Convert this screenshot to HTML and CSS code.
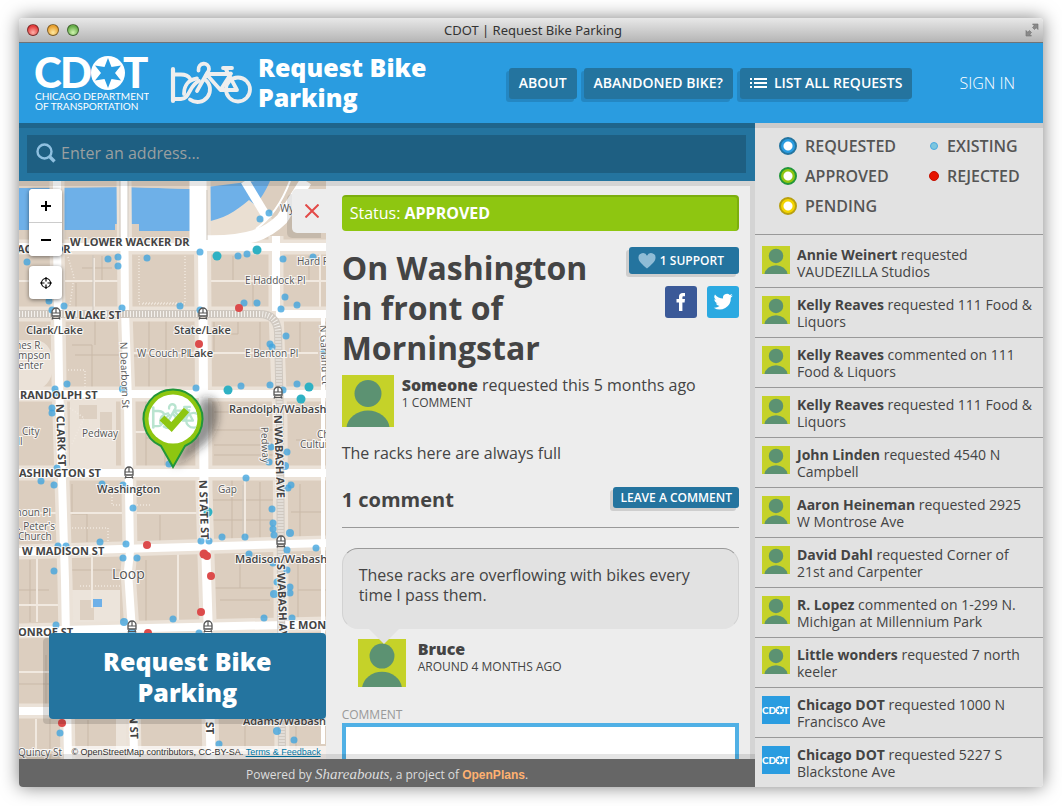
FILE: index.html
```html
<!DOCTYPE html>
<html lang="en">
<head>
<meta charset="utf-8">
<title>CDOT | Request Bike Parking</title>
<link rel="stylesheet" href="styles.css">
</head>
<body>
<svg class="sprites" aria-hidden="true">
  <symbol id="person" viewBox="0 0 52 52">
    <rect width="52" height="52" fill="#c5d229"/>
    <circle cx="26" cy="18.500" r="13.500" fill="#5c9272"/>
    <path d="M4.500 52a21.700 19 0 0 1 43 0z" fill="#5c9272"/>
  </symbol>
  <symbol id="star" viewBox="-17 -17 34 34">
    <circle r="17" fill="#fff"/>
    <path d="M0-15 3.500-6 13-7.500 7 0 13 7.500 3.500 6 0 15-3.500 6-13 7.500-7 0-13-7.500-3.500-6z" fill="#2a9ce0"/>
  </symbol>
  <symbol id="cdot" viewBox="0 0 28 28">
    <rect width="28" height="28" fill="#2a9ce0"/>
    <text class="cdot-small" x="0" y="18">CD</text>
    <use href="#star" x="13.500" y="10" width="8.500" height="8.500"/>
    <text class="cdot-small" x="21" y="18">T</text>
  </symbol>
  <symbol id="tram" viewBox="0 0 10 13">
    <path d="M1 9V5a4 4 0 0 1 8 0v4z" fill="#fff" stroke="#555" stroke-width="1.300"/>
    <path d="M1 6h8M5 1v5M2 10l-1 2.500M8 10l1 2.500M2 11.500h6" stroke="#555" stroke-width="1.200" fill="none"/>
  </symbol>
</svg>

<div class="window">
  <div class="titlebar">
    <div class="lights"><span class="light red"></span><span class="light amber"></span><span class="light green"></span></div>
    <div class="window-title">CDOT | Request Bike Parking</div>
    <div class="corner"><svg viewBox="0 0 14 14" width="14" height="14" aria-hidden="true"><path d="M7.500 1H13v5.500l-1.800-1.800L9.500 6.500l-2-2 1.700-1.700zM1 7.500l1.800 1.800L4.500 7.500l2 2-1.700 1.700L6.500 13H1z" fill="#8a8a8a" stroke="#707070" stroke-width=".6"/></svg></div>
  </div>

  <header class="header">
    <a class="logo" href="#" aria-label="Chicago Department of Transportation">
      <svg viewBox="33 56 116 56" width="116" height="56">
        <text class="cdot-big" x="34" y="89">C</text>
        <text class="cdot-big" x="60" y="89">D</text>
        <use href="#star" x="91" y="57" width="34" height="34"/>
        <text class="cdot-big" x="123" y="89">T</text>
        <text class="cdot-line" x="35" y="101">CHICAGO DEPARTMENT</text>
        <text class="cdot-line" x="35" y="111">OF TRANSPORTATION</text>
      </svg>
    </a>
    <a class="brand" href="#">
      <svg class="bike" viewBox="170 58 83 45" width="83" height="45" aria-hidden="true">
        <g id="bike-shape" fill="none" stroke-width="3.800" stroke-linecap="round" stroke-linejoin="round">
          <path d="M173 67v32" stroke-width="4.200"/>
          <path d="M175 72.500h6c5 0 7 1 9 4M175 97h6c9 0 8-14 18-18"/>
          <path d="M184 92c0-9 5-14.500 13-15.500M205 77.500a12 12 0 1 1-15 20"/>
          <circle cx="238" cy="87.500" r="12"/>
          <path d="M198.500 68.500c-1-8.500 10.500-9 10.500-1.500 0 3-2 3-3 6L197 89M207 72h20.500M208 74l12.500 14H237L226 67.500M223 66h9M231 71.500 220.500 88"/>
        </g>
      </svg>
      <span class="brand-name">Request Bike Parking</span>
    </a>
    <nav class="nav">
      <a class="btn" href="#">ABOUT</a>
      <a class="btn" href="#">ABANDONED BIKE?</a>
      <a class="btn" href="#"><svg viewBox="0 0 17 12" width="17" height="12" aria-hidden="true"><path d="M0 2h2M0 6h2M0 10h2M4 2h13M4 6h13M4 10h13" stroke="#fff" stroke-width="2"/></svg>LIST ALL REQUESTS</a>
    </nav>
    <a class="signin" href="#">SIGN IN</a>
  </header>

  <div class="body">
    <main class="main">
      <form class="search">
        <label class="search-box">
          <svg viewBox="0 0 20 20" width="20" height="20" aria-hidden="true"><circle cx="8.500" cy="8.500" r="7" fill="none" stroke="#8fc0e0" stroke-width="2.400"/><path d="m13.500 13.500 5 5" stroke="#8fc0e0" stroke-width="3.400"/></svg>
          <input type="text" placeholder="Enter an address..." aria-label="Enter an address">
        </label>
      </form>

      <div class="content">
        <section class="map">
          <svg class="map-art" viewBox="19 181 307 578" preserveAspectRatio="xMinYMin slice" role="img" aria-label="Map of the Loop">
            <defs>
              <clipPath id="pin-face"><circle cx="173" cy="419" r="24.500"/></clipPath>
              <filter id="soft" x="-30%" y="-30%" width="160%" height="160%"><feGaussianBlur stdDeviation="4"/></filter>
            </defs>
            <rect x="19" y="181" width="307" height="578" fill="#dccebf"/>
            <path d="M19 188l106-1 66 2 64-8h15c-6 14-13 24-26 33-14 9-26 9-40 14v3h-65v-7h-8v7h-12v-7h-4v6H19z" fill="#6eb0e8"/>
            <path d="M19 188l106-1 66 2 14-2v-6H19z" fill="#dfd1c2"/>
            <path d="M205 222c18-3 30-10 44-22l28 23c-15 13-38 17-72 17z" fill="#eadfd2"/>
            <path d="M19 340h18c22 4 22 44 0 50l-18 6M70 398h46v70H70z" fill="#ebe2d8"/>
            <path d="M70 590h50v40H70zM116 719h23v30h-23z" fill="#ece4db"/>
            <path d="M79 405h18v14H79zM100 412h12v24h-12zM80 600h14v20H80z" fill="#ddd0c2"/>
            <g fill="none" stroke="#c9b9a8" stroke-width="1">
              <path d="M149 320v72M145 356h-17M166 320v74M214 322v30M260 322v31M238 322v12h-24M300 322v30M233 256v24M253 283v30M309 256v24M72 345h20v48M75 355h44M95 320v25M146 400v68M146 438h50M165 437v32M214 412h60M214 430h60M232 480v60M260 482v60M72 484v30h15v28M160 515v28M178 556v70M146 560v64M214 588h60M220 600h50M240 556v32M298 560v60M298 590h28M296 410h28M296 440h28M300 484v58M30 560v62M19 590h30M46 655v60M19 684h30M50 719v40M88 720v38M245 720v30M296 720v34M102 256v24M82 268h30M76 283v28M214 445h60M214 455h60M291 512h34M213 500h60M213 520h60M72 570h50"/>
            </g>
            <g fill="none" stroke="#f1e9e0" stroke-width="2">
              <path d="M19 281h101M205 281h121M128 353h190M128 432h70M19 513h180M19 605h40M92 548v60M178 548v76M245 480v60M37 548v74M94 258v54M19 672h30M36 719v38M19 750h300M138 750v9M320 240v70"/>
              <path d="M139 256v48h46v-48M143 303h42M68 257l6 20-5 34M65 370h20v24M70 408l14 10-12 26M108 544v-16H68M150 505H112v-16M80 586h46" stroke-dasharray="1 2" stroke-width="1.500"/>
            </g>
            <g fill="none" stroke="#ebe2d8">
              <path d="M57 181v60l2 140 3 100 3 100 3 178" stroke-width="15"/>
              <path d="M124 181l1 130 3 90 1 90 1 60-2 20 4 60 2 128" stroke-width="15"/>
              <path d="M202 181l1 130 1 180 4 130 3 138" stroke-width="17"/>
              <path d="M276 236v75l4 110 2 338" stroke-width="15"/>
              <path d="M19 247h307M19 314h307M19 394h307M19 473h307M19 552l307-9M19 631l307-7M19 711h307" stroke-width="15"/>
            </g>
            <g fill="none" stroke="#fff">
              <path d="M57 181v60l2 140 3 100 3 100 3 178" stroke-width="8"/>
              <path d="M124 181l1 130 3 90 1 90 1 60-2 20 4 60 2 128" stroke-width="8"/>
              <path d="M194 181v66M202 181l1 130 1 180 4 130 3 138" stroke-width="9"/>
              <path d="M276 236v75" stroke-width="8"/>
              <path d="M19 247h307M276 314h50M19 394h307M19 473h307M19 552l307-9M19 631l307-7M19 711h307" stroke-width="8"/>
              <path d="M200 241c50 2 68-8 82-22l24-38" stroke-width="12"/>
              <path d="M245 181l23 38" stroke-width="9"/>
              <path d="M323 314v430" stroke-width="4"/>
              <path d="M290 181c-9 24-20 38-34 48" stroke-width="2"/>
            </g>
            <g fill="none" stroke="#cdc6bd">
              <path d="M19 314h240q18 0 19 18l2 90 2 337" stroke-width="8" stroke="#d0c9c1"/>
              <path d="M19 314h240q18 0 19 18l2 90 2 337" stroke-width="6" stroke-dasharray="1 2" stroke="#f4f1ed"/>
              <path d="M93 255v55M243 485v52M207 190v50M120 181v60M128 181v60"/>
            </g>
            <path d="M93 599h9v8h-9z" fill="#6eb0e8"/>
            <g fill="#3fa4df" fill-opacity=".78">
              <circle cx="27" cy="262" r="3.500"/><circle cx="108" cy="259" r="3.500"/><circle cx="118" cy="257" r="3.500"/><circle cx="118" cy="266" r="3.500"/><circle cx="147" cy="258" r="3.500"/><circle cx="200" cy="252" r="3.500"/><circle cx="238" cy="256" r="3.500"/><circle cx="247" cy="254" r="3.500"/><circle cx="260" cy="219" r="3.500"/><circle cx="269" cy="213" r="3.500"/><circle cx="283" cy="259" r="3.500"/><circle cx="313" cy="257" r="3.500"/><circle cx="285" cy="297" r="3.500"/><circle cx="297" cy="305" r="3.500"/><circle cx="257" cy="303" r="3.500"/><circle cx="244" cy="303" r="3.500"/><circle cx="281" cy="309" r="3.500"/><circle cx="122" cy="308" r="3.500"/><circle cx="180" cy="306" r="3.500"/><circle cx="64" cy="306" r="3.500"/><circle cx="49" cy="301" r="3.500"/><circle cx="52" cy="310" r="3.500"/><circle cx="200" cy="310" r="3.500"/><circle cx="190" cy="331" r="3.500"/><circle cx="286" cy="336" r="3.500"/><circle cx="270" cy="344" r="3.500"/><circle cx="272" cy="347" r="3.500"/><circle cx="67" cy="384" r="3.500"/><circle cx="241" cy="386" r="3.500"/><circle cx="270" cy="385" r="3.500"/><circle cx="297" cy="384" r="3.500"/><circle cx="324" cy="353" r="3.500"/>
              <circle cx="55" cy="389" r="3.500"/><circle cx="56" cy="393" r="3.500"/><circle cx="52" cy="408" r="3.500"/><circle cx="52" cy="413" r="3.500"/><circle cx="123" cy="389" r="4"/><circle cx="196" cy="388" r="3.500"/><circle cx="283" cy="390" r="3.500"/><circle cx="57" cy="468" r="3.500"/><circle cx="41" cy="481" r="3.500"/><circle cx="54" cy="485" r="3.500"/><circle cx="102" cy="484" r="3.500"/><circle cx="123" cy="485" r="3.500"/><circle cx="169" cy="464" r="3.500"/><circle cx="246" cy="478" r="3.500"/><circle cx="133" cy="508" r="3.500"/><circle cx="271" cy="447" r="3.500"/><circle cx="287" cy="452" r="3.500"/><circle cx="269" cy="462" r="3.500"/><circle cx="285" cy="466" r="4"/><circle cx="291" cy="485" r="3.500"/><circle cx="288" cy="488" r="3.500"/><circle cx="272" cy="509" r="3.500"/><circle cx="273" cy="523" r="3.500"/><circle cx="273" cy="529" r="3.500"/><circle cx="274" cy="535" r="3.500"/><circle cx="290" cy="533" r="4"/><circle cx="201" cy="541" r="3.500"/><circle cx="209" cy="541" r="3.500"/><circle cx="222" cy="537" r="3.500"/><circle cx="245" cy="537" r="3.500"/><circle cx="126" cy="544" r="3.500"/><circle cx="100" cy="542" r="3.500"/><circle cx="58" cy="546" r="3.500"/><circle cx="66" cy="546" r="3.500"/><circle cx="54" cy="571" r="3.500"/><circle cx="123" cy="558" r="3.500"/><circle cx="137" cy="558" r="3.500"/><circle cx="287" cy="550" r="3.500"/><circle cx="249" cy="554" r="3.500"/><circle cx="273" cy="563" r="3.500"/><circle cx="287" cy="570" r="3.500"/><circle cx="277" cy="582" r="3.500"/><circle cx="290" cy="587" r="3.500"/><circle cx="316" cy="548" r="3.500"/>
              <circle cx="56" cy="625" r="3.500"/><circle cx="124" cy="622" r="4"/><circle cx="173" cy="619" r="3.500"/><circle cx="274" cy="594" r="4"/><circle cx="290" cy="593" r="3.500"/><circle cx="264" cy="618" r="3.500"/><circle cx="292" cy="618" r="3.500"/><circle cx="132" cy="632" r="4"/><circle cx="199" cy="633" r="3.500"/><circle cx="60" cy="733" r="3.500"/><circle cx="219" cy="744" r="3.500"/><circle cx="277" cy="731" r="4"/><circle cx="294" cy="740" r="3.500"/>
            </g>
            <g fill="#2fb1c3"><circle cx="217" cy="256" r="4.500"/><circle cx="257" cy="250" r="4.500"/><circle cx="228" cy="390" r="4.500"/><circle cx="309" cy="387" r="4.500"/><circle cx="301" cy="399" r="4.500"/><circle cx="208" cy="512" r="4.500"/></g>
            <g fill="#dc4b4b"><circle cx="239" cy="308" r="4"/><circle cx="199" cy="344" r="4"/><circle cx="147" cy="545" r="4"/><circle cx="204" cy="554" r="4.500"/><circle cx="207" cy="556" r="4"/><circle cx="211" cy="576" r="4"/><circle cx="201" cy="612" r="4"/><circle cx="62" cy="723" r="4"/><circle cx="148" cy="633" r="4"/></g>
            <use href="#tram" x="51" y="307" width="10" height="13"/><use href="#tram" x="198" y="307" width="10" height="13"/><use href="#tram" x="273" y="386" width="10" height="13"/><use href="#tram" x="124" y="466" width="10" height="13"/><use href="#tram" x="276" y="535" width="10" height="13"/><use href="#tram" x="127" y="620" width="10" height="13"/><use href="#tram" x="203" y="620" width="10" height="13"/>
            <g class="road">
              <text x="70" y="246">W LOWER WACKER DR</text><text x="17" y="253">ACKER DR</text>
              <text x="65" y="319">W LAKE ST</text><text x="20" y="399">RANDOLPH ST</text>
              <text x="19" y="477">ASHINGTON ST</text><text x="22" y="555">W MADISON ST</text>
              <text x="18" y="636">ONROE ST</text><text x="289" y="629">E MONROE</text>
              <text transform="translate(56 404) rotate(88)">N CLARK ST</text>
              <text transform="translate(199 480) rotate(88)">N STATE ST</text>
              <text transform="translate(274 415) rotate(88)">N WABASH AVE</text>
              <text transform="translate(277 564) rotate(88)">S WABASH AVE</text>
              <text transform="translate(129 699) rotate(88)">ORN ST</text>
              <text transform="translate(205 699) rotate(88)">ATE ST</text>
            </g>
            <g class="place">
              <text x="26" y="334">Clark/Lake</text><text x="174" y="334">State/Lake</text><text x="188" y="357">Lake</text>
              <text x="229" y="413">Randolph/Wabash</text><text x="97" y="493">Washington</text><text x="235" y="563">Madison/Wabash</text><text x="243" y="725">Adams/Wabash</text>
            </g>
            <g class="minor">
              <text x="280" y="212">Wy</text><text x="297" y="265">Hard R</text><text x="245" y="284">E Haddock Pl</text>
              <text x="137" y="357">W Couch Pl</text><text x="245" y="357">E Benton Pl</text>
              <text x="12" y="349">mes R.</text><text x="12" y="359">ompson</text><text x="12" y="369">Center</text>
              <text x="22" y="435">City</text><text x="12" y="445">all</text><text x="82" y="437">Pedway</text><text x="218" y="493">Gap</text>
              <text x="317" y="438">Chicago</text><text x="300" y="448">Cultural</text>
              <text x="13" y="516">lhoun Pl</text><text x="18" y="530">. Peter's</text><text x="18" y="540">Church</text>
              <text x="18" y="756">Quincy St</text>
              <text transform="translate(120 342) rotate(88)">N Dearborn St</text>
              <text transform="translate(261 427) rotate(88)">Pedway</text>
              <text transform="translate(320 325) rotate(88)">N Garland Ct</text>
            </g>
            <text class="district" x="112" y="579">Loop</text>
            <path d="M173 468l22-36 6-34 12 0c8 10 6 30-6 44z" fill="#222" fill-opacity=".5" filter="url(#soft)"/>
            <path d="M173 467l-12-21a29.500 29.500 0 1 1 24 0z" fill="#8ec611" stroke="#22963a" stroke-width="2"/>
            <circle cx="173" cy="419" r="24.500" fill="#fff"/>
            <g clip-path="url(#pin-face)"><use href="#bike-shape" transform="translate(46 366) scale(.62)" stroke="#b9e4d0"/></g>
            <path d="M162 418l9.500 9 15-17" fill="none" stroke="#8ec611" stroke-width="7"/>
          </svg>
          <div class="zoom"><button type="button" aria-label="Zoom in"><svg viewBox="0 0 12 12" width="12" height="12"><path d="M6 1v10M1 6h10" stroke="#000" stroke-width="2"/></svg></button><button type="button" aria-label="Zoom out"><svg viewBox="0 0 12 12" width="12" height="12"><path d="M1 6h10" stroke="#000" stroke-width="2"/></svg></button></div>
          <button class="locate" type="button" aria-label="Locate me"><svg viewBox="0 0 14 14" width="14" height="14"><circle cx="7" cy="7" r="4.500" fill="none" stroke="#000" stroke-width="1.200"/><path d="M7 1v4.500M7 8.500V13M1 7h4.500M8.500 7H13" stroke="#000" stroke-width="1.200"/></svg></button>
          <button class="close" type="button" aria-label="Close"><svg viewBox="0 0 14 14" width="14" height="14"><path d="M.500.500l13 13M13.500.500l-13 13" stroke="#e34a48" stroke-width="2"/></svg></button>
          <button class="add" type="button">Request Bike<br>Parking</button>
          <div class="credit">© OpenStreetMap contributors, CC-BY-SA. <a href="#">Terms &amp; Feedback</a></div>
        </section>

        <section class="detail">
          <div class="status">Status: <strong>APPROVED</strong></div>
          <div class="heading">
            <h1>On Washington in front of Morningstar</h1>
            <div class="actions">
              <button class="btn support" type="button"><svg viewBox="0 0 18 16" width="18" height="16" aria-hidden="true"><path d="M9 15.500C5 12 .500 8.500.500 5A4.400 4.400 0 0 1 9 3a4.400 4.400 0 0 1 8.500 2c0 3.500-4.500 7-8.500 10.500z" fill="#8fbcd6"/></svg>1 SUPPORT</button>
              <div class="social">
                <a class="facebook" href="#" aria-label="Facebook"><svg viewBox="0 0 32 32"><path d="M14 25v-8.500h-2.500V13H14v-2.200C14 8.200 15.500 7 17.800 7H20v3.200h-1.400c-.9 0-1.200.4-1.200 1.200V13H20l-.4 3.500h-2.200V25z" fill="#fff"/></svg></a>
                <a class="twitter" href="#" aria-label="Twitter"><svg viewBox="0 0 32 32"><path d="M25.800 9.600a8 8 0 0 1-2.200.7 4 4 0 0 0 1.600-2.200 8 8 0 0 1-2.400 1 3.900 3.900 0 0 0-6.700 3.500A11 11 0 0 1 8 8.500a3.900 3.900 0 0 0 1.200 5.300 4 4 0 0 1-1.800-.5c0 2 1.300 3.600 3.200 4a4 4 0 0 1-1.800 0 3.900 3.900 0 0 0 3.700 2.700A7.900 7.900 0 0 1 6.700 21.700 11.100 11.100 0 0 0 23.800 11.800a8 8 0 0 0 2-2.200z" fill="#fff"/></svg></a>
              </div>
            </div>
          </div>
          <div class="author">
            <svg width="52" height="52" aria-hidden="true"><use href="#person"/></svg>
            <div><p><strong>Someone</strong> requested this 5 months ago</p><p class="meta">1 COMMENT</p></div>
          </div>
          <p class="description">The racks here are always full</p>
          <div class="comments-head"><h2>1 comment</h2><a class="btn leave" href="#comment">LEAVE A COMMENT</a></div>
          <article class="comment">
            <p class="bubble">These racks are overflowing with bikes every time I pass them.</p>
            <div class="commenter">
              <svg width="48" height="48" aria-hidden="true"><use href="#person"/></svg>
              <div><p><strong>Bruce</strong></p><p class="meta">AROUND 4 MONTHS AGO</p></div>
            </div>
          </article>
          <label class="field-label" for="comment">COMMENT</label>
          <textarea id="comment" rows="4"></textarea>
        </section>
      </div>

      <footer class="footer"><p>Powered by <a class="script" href="#">Shareabouts</a>, a project of <a class="openplans" href="#">OpenPlans</a>.</p></footer>
    </main>

    <aside class="sidebar">
      <div class="legend">
        <ul>
          <li><span class="ring requested"></span>REQUESTED</li>
          <li><span class="ring approved"></span>APPROVED</li>
          <li><span class="ring pending"></span>PENDING</li>
        </ul>
        <ul>
          <li><span class="dot existing"></span>EXISTING</li>
          <li><span class="dot rejected"></span>REJECTED</li>
        </ul>
      </div>
      <ul class="feed">
        <li><svg class="face" aria-hidden="true"><use href="#person"/></svg><p><strong>Annie Weinert</strong> requested VAUDEZILLA Studios</p></li>
        <li><svg class="face" aria-hidden="true"><use href="#person"/></svg><p><strong>Kelly Reaves</strong> requested 111 Food &amp; Liquors</p></li>
        <li><svg class="face" aria-hidden="true"><use href="#person"/></svg><p><strong>Kelly Reaves</strong> commented on 111 Food &amp; Liquors</p></li>
        <li><svg class="face" aria-hidden="true"><use href="#person"/></svg><p><strong>Kelly Reaves</strong> requested 111 Food &amp; Liquors</p></li>
        <li><svg class="face" aria-hidden="true"><use href="#person"/></svg><p><strong>John Linden</strong> requested 4540 N Campbell</p></li>
        <li><svg class="face" aria-hidden="true"><use href="#person"/></svg><p><strong>Aaron Heineman</strong> requested 2925 W Montrose Ave</p></li>
        <li><svg class="face" aria-hidden="true"><use href="#person"/></svg><p><strong>David Dahl</strong> requested Corner of 21st and Carpenter</p></li>
        <li><svg class="face" aria-hidden="true"><use href="#person"/></svg><p><strong>R. Lopez</strong> commented on 1-299 N. Michigan at Millennium Park</p></li>
        <li><svg class="face" aria-hidden="true"><use href="#person"/></svg><p><strong>Little wonders</strong> requested 7 north keeler</p></li>
        <li><svg class="face" aria-hidden="true"><use href="#cdot"/></svg><p><strong>Chicago DOT</strong> requested 1000 N Francisco Ave</p></li>
        <li><svg class="face" aria-hidden="true"><use href="#cdot"/></svg><p><strong>Chicago DOT</strong> requested 5227 S Blackstone Ave</p></li>
      </ul>
    </aside>
  </div>
</div>
</body>
</html>
```

FILE: styles.css
```css
* { box-sizing: border-box; }
body {
  margin: 0;
  padding: 18px 19px 19px;
  height: 100vh;
  background: #fff;
  color: #444;
  font: 16px/20px "Open Sans", "Noto Sans", sans-serif;
}
h1, h2, p, ul { margin: 0; padding: 0; }
ul { list-style: none; }
a { color: inherit; text-decoration: none; }
button { font: inherit; border: 0; padding: 0; cursor: pointer; }
svg { display: block; flex: none; }
.sprites { position: absolute; width: 0; height: 0; }

.window {
  display: flex;
  flex-direction: column;
  height: 100%;
  overflow: hidden;
  border-radius: 4px;
  box-shadow: 0 0 18px rgba(0, 0, 0, .5);
}

/* Title bar */
.titlebar {
  display: flex;
  align-items: center;
  flex: none;
  height: 25px;
  padding: 0 4px 0 8px;
  background: linear-gradient(#e8e8e8, #b5b5b5);
  border-bottom: 1px solid #6e7377;
}
.lights { display: flex; gap: 8px; flex: 1; }
.light { width: 12px; height: 12px; border-radius: 50%; border: 1px solid rgba(0, 0, 0, .45); }
.red { background: radial-gradient(circle at 50% 75%, #ffb0a8, #e23c3c 70%); }
.amber { background: radial-gradient(circle at 50% 75%, #ffe9a0, #e8a030 70%); }
.green { background: radial-gradient(circle at 50% 75%, #d0f5b0, #66ad48 70%); }
.window-title { font: 13px/20px "Noto Sans", sans-serif; color: #333; }
.corner { display: flex; justify-content: flex-end; flex: 1; }

/* Header */
.header {
  display: flex;
  align-items: center;
  flex: none;
  height: 80px;
  padding: 0 28px 0 14px;
  background: #2a9ce0;
  color: #fff;
}
.cdot-big { font: 900 42px Lato, sans-serif; fill: #fff; }
.cdot-line { font: 10px Lato, sans-serif; fill: #fff; }
.cdot-small { font: 900 10px Lato, sans-serif; fill: #fff; }
.brand { display: flex; align-items: center; gap: 5px; margin-left: 21px; padding-bottom: 2px; }
.brand-name { width: 180px; font-size: 25px; font-weight: 800; line-height: 30px; }
.nav { display: flex; gap: 7px; margin-left: auto; }
.btn {
  display: flex;
  align-items: center;
  background: #24749f;
  color: #fff;
  border-radius: 3px;
  font-weight: 600;
  white-space: nowrap;
  box-shadow: -3px 3px 0 rgba(0, 0, 0, .13);
}
.nav .btn { gap: 7px; height: 31px; padding: 0 10px; font-size: 14px; }
.signin { margin-left: 47px; font-weight: 300; white-space: nowrap; }

/* Columns */
.body { display: flex; flex: 1; min-height: 0; }
.main { display: flex; flex-direction: column; flex: 1; min-width: 0; }
.search {
  flex: none;
  padding: 12px 9px 8px 8px;
  background: #24749f;
  box-shadow: inset 0 5px 0 rgba(0, 0, 0, .12);
}
.search-box { display: flex; align-items: center; gap: 5px; height: 38px; padding: 0 9px 2px; background: #1e5f82; }
.search input {
  flex: 1;
  min-width: 0;
  padding: 0;
  border: 0;
  outline: 0;
  background: transparent;
  color: #fff;
  font: inherit;
}
.search input::placeholder { color: #9a9fa0; opacity: 1; }
.content {
  position: relative;
  display: grid;
  grid-template-columns: minmax(0, 5fr) minmax(0, 7fr);
  flex: 1;
  min-height: 0;
}
.content::after {
  content: "";
  position: absolute;
  inset: 0;
  pointer-events: none;
  box-shadow: inset -5px 5px 0 rgba(0, 0, 0, .1), inset 0 -5px 0 rgba(0, 0, 0, .1);
}

/* Map */
.map { position: relative; overflow: hidden; }
.map-art { position: absolute; width: 100%; height: 100%; font-family: "Open Sans", sans-serif; }
.map-art text { paint-order: stroke; stroke: rgba(255, 255, 255, .8); stroke-width: 2px; fill: #444; }
.road { font-size: 11px; font-weight: 700; }
.place { font-size: 11px; font-weight: 600; }
.minor { font-size: 10px; }
.map-art .minor text { fill: #555; }
.map-art .district { font-size: 14px; fill: #555; }
.zoom, .locate { position: absolute; left: 10px; border-radius: 4px; background: #fff; box-shadow: 0 1px 4px rgba(0, 0, 0, .5); }
.zoom { top: 8px; display: grid; overflow: hidden; }
.zoom button { display: grid; place-items: center; width: 33px; height: 33px; background: #fff; }
.zoom button + button { height: 34px; border-top: 1px solid #ccc; }
.locate { top: 85px; display: grid; place-items: center; width: 33px; height: 33px; }
.close {
  position: absolute;
  right: 0;
  top: 8px;
  display: grid;
  place-items: center;
  width: 34px;
  height: 44px;
  padding-left: 6px;
  border-radius: 5px 0 0 5px;
  background: #ededed;
  box-shadow: -5px 5px 0 rgba(0, 0, 0, .1);
}
.add {
  position: absolute;
  left: 30px;
  right: 0;
  bottom: 40px;
  padding: 13px 0 11px;
  border-radius: 4px;
  background: #24749f;
  color: #fff;
  font-size: 25px;
  font-weight: 800;
  line-height: 31px;
  box-shadow: -6px 5px 0 rgba(0, 0, 0, .13);
}
.credit {
  position: absolute;
  right: 0;
  bottom: 0;
  padding: 0 5px;
  background: rgba(255, 255, 255, .7);
  color: #333;
  font: 9px/13px "Liberation Sans", Arial, sans-serif;
  white-space: nowrap;
}
.credit a { color: #0078a8; text-decoration: underline; }

/* Request detail */
.detail { overflow: hidden; padding: 14px 16px; background: #ededed; }
.status {
  height: 36px;
  padding: 0 8px;
  border-radius: 4px;
  background: #8ec611;
  color: #fff;
  line-height: 36px;
  box-shadow: inset -1px 1px 0 1px rgba(0, 0, 0, .12);
}
.heading { display: flex; justify-content: space-between; margin-top: 16px; }
h1 { width: 260px; font-size: 32px; font-weight: 700; line-height: 40px; padding-top: 1px; }
.actions { display: flex; flex-direction: column; align-items: flex-end; gap: 12px; }
.support { gap: 4px; height: 27px; padding: 0 15px 0 9px; font-size: 12px; }
.social { display: flex; gap: 10px; }
.social a { width: 32px; height: 32px; border-radius: 3px; }
.facebook { background: #3b5998; }
.twitter { background: #2ba9e1; }
.author { display: flex; gap: 8px; margin-top: 7px; }
strong { font-weight: 700; }
.author strong, .commenter strong { font-weight: 800; }
.meta { font-size: 12px; line-height: 16px; }
.description { margin-top: 16px; }
.comments-head {
  display: flex;
  align-items: flex-start;
  justify-content: space-between;
  height: 41px;
  margin-top: 24px;
  border-bottom: 1px solid #999;
}
h2 { font-size: 20px; line-height: 26px; }
.leave { height: 21px; padding: 0 7px; font-size: 12px; }
.bubble {
  position: relative;
  margin-top: 20px;
  padding: 16px 16px 23px;
  border: 1px solid #d2d2d2;
  border-top-color: #999;
  border-bottom-color: #e2e2e2;
  border-radius: 16px;
  background: #e2e2e2;
}
.bubble::after {
  content: "";
  position: absolute;
  left: 25px;
  top: 100%;
  border: 16px solid transparent;
  border-top-color: #e2e2e2;
  border-bottom: 0;
}
.commenter { display: flex; gap: 12px; margin: 10px 0 0 16px; }
.field-label { display: block; margin-top: 19px; font-size: 12px; line-height: 17px; color: #999; }
textarea { display: block; width: 100%; border: 4px solid #50b0e5; background: #fff; font: inherit; resize: none; }

.footer {
  flex: none;
  height: 28px;
  padding-top: 5px;
  background: #666;
  color: #ddd;
  font-size: 12px;
  text-align: center;
}
.script { font: italic 15px/20px "Liberation Serif", serif; }
.openplans { color: #ffb170; font: 700 12px/20px "Liberation Sans", Arial, sans-serif; }

/* Sidebar */
.sidebar { flex: none; width: 288px; overflow: hidden; background: #e2e2e2; }
.legend {
  display: flex;
  gap: 33px;
  padding: 8px 0 13px 24px;
  border-bottom: 1px solid #999;
  color: #555;
  font-weight: 600;
  line-height: 30px;
  box-shadow: inset 0 5px 0 rgba(0, 0, 0, .1);
}
.legend li { display: flex; align-items: center; gap: 8px; }
.ring { width: 18px; height: 18px; border: 2px solid; border-radius: 50%; }
.requested { border-color: #24749f; background: radial-gradient(circle, #fff 4px, #2a9ce0 5px); }
.approved { border-color: #22963a; background: radial-gradient(circle, #fff 4px, #8ec611 5px); }
.pending { border-color: #b8a010; background: radial-gradient(circle, #fff 4px, #f3d400 5px); }
.dot { width: 10px; height: 10px; border-radius: 50%; }
.existing { width: 8px; height: 8px; margin: 0 1px; border: 1px solid #4aa9e0; background: #7cc6de; }
.rejected { background: #e61400; border: 1px solid #c41000; }
.feed { padding-top: 3px; }
.feed li { display: flex; gap: 7px; height: 50px; padding: 8px 7px; border-bottom: 1px solid #999; font-size: 14px; line-height: 17px; }
.feed li:last-child { border-bottom: 0; }
.face { width: 28px; height: 28px; }
.bike { stroke: #eee; }
```
